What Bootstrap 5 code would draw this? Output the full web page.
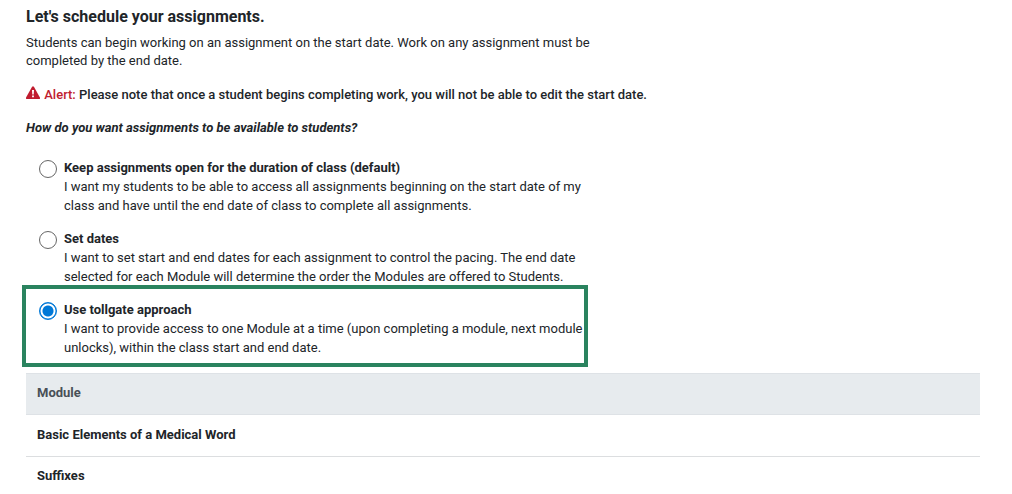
<!DOCTYPE html>
<html lang="en">
<head>
<meta charset="utf-8">
<meta name="viewport" content="width=device-width, initial-scale=1">
<title>Schedule assignments</title>
<link href="https://cdn.jsdelivr.net/npm/bootstrap@5.3.0/dist/css/bootstrap.min.css" rel="stylesheet">
<style>
body { font-family: Roboto, "Liberation Sans", sans-serif; font-size: 13px; line-height: 18px; color: #212529; background: #fff; }
.page { padding: 5px 32px 0 26px; }
.page-title { font-size: 16px; line-height: 24px; font-weight: 700; margin-bottom: 5px; }
.intro { max-width: 580px; margin-bottom: 16px; }
.notice { font-weight: 500; margin-bottom: 15px; }
.notice-label { color: #c01c2f; }
.notice svg { width: 14px; height: 14px; margin: -5px 1px 0 0; vertical-align: middle; }
.question { font-size: 13px; line-height: 18px; font-weight: 700; font-style: italic; margin-bottom: 22px; }
.choices { max-width: 566px; margin: 0 0 6px -4px; }
.choice { gap: 7px; padding: 0 4px 15px 17px; }
.choice + .choice { padding-bottom: 0; }
.choice.highlight { border: 4px solid #2a835f; margin-top: -1px; padding: 12px 0 6px 13px; }
.choice .form-check-input { flex: none; width: 18px; height: 18px; margin: 1px 0 0; border: 1px solid #666; background: #fff; box-shadow: none; }
.choice .form-check-input:checked { border: 1px solid #0078d7; background: radial-gradient(circle, #0078d7 5px, #fff 6px, #fff 7px, #0078d7 8px); }
.choice label { font-weight: 700; display: block; }
.choice p { line-height: 19px; }
.modules { --bs-table-color: #212529; border-color: #dcdee0; }
.modules th { font-weight: 700; padding: 10px 11px 11px; line-height: 20px; border-width: 0 0 1px; }
.modules tr:last-child th { padding-top: 9px; }
.modules thead tr th { background: #e7ebee; color: #495057; border-top: 1px solid #dee2e6; border-bottom-color: #dee2e6; padding: 9px 11px 11px; }
</style>
</head>
<body>
<main class="page">
  <h1 class="page-title">Let's schedule your assignments.</h1>
  <p class="intro">Students can begin working on an assignment on the start date. Work on any assignment must be completed by the end date.</p>
  <p class="notice">
    <svg viewBox="0 0 14 14" aria-hidden="true"><path fill="#c01c2f" d="M6.1.8Q7-.5 7.9.8l5.9 10.5Q14.500 13 13 13H1Q-.5 13 .2 11.300Z"/><path fill="#fff" d="M6 4h2l-.3 4.500H6.300ZM6.100 9.500h1.800v1.700H6.100Z"/></svg>
    <span class="notice-label">Alert:</span> Please note that once a student begins completing work, you will not be able to edit the start date.
  </p>
  <h2 class="question" id="availability">How do you want assignments to be available to students?</h2>
  <div class="choices" role="radiogroup" aria-labelledby="availability">
    <div class="choice d-flex align-items-start">
      <input class="form-check-input" type="radio" name="mode" id="mode-open">
      <div><label for="mode-open">Keep assignments open for the duration of class (default)</label>
      <p class="mb-0">I want my students to be able to access all assignments beginning on the start date of my class and have until the end date of class to complete all assignments.</p></div>
    </div>
    <div class="choice d-flex align-items-start">
      <input class="form-check-input" type="radio" name="mode" id="mode-dates">
      <div><label for="mode-dates">Set dates</label>
      <p class="mb-0">I want to set start and end dates for each assignment to control the pacing. The end date selected for each Module will determine the order the Modules are offered to Students.</p></div>
    </div>
    <div class="choice highlight d-flex align-items-start">
      <input class="form-check-input" type="radio" name="mode" id="mode-tollgate" checked>
      <div><label for="mode-tollgate">Use tollgate approach</label>
      <p class="mb-0">I want to provide access to one Module at a time (upon completing a module, next module unlocks), within the class start and end date.</p></div>
    </div>
  </div>
  <table class="table modules mb-0">
    <thead><tr><th scope="col">Module</th></tr></thead>
    <tbody>
      <tr><th scope="row">Basic Elements of a Medical Word</th></tr>
      <tr><th scope="row" class="border-0 pb-0">Suffixes</th></tr>
    </tbody>
  </table>
</main>
<script src="https://cdn.jsdelivr.net/npm/bootstrap@5.3.0/dist/js/bootstrap.bundle.min.js"></script>
</body>
</html>
